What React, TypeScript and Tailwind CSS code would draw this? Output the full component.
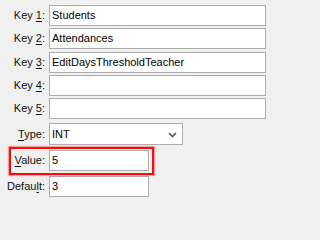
import React from 'react';

const font = { fontFamily: 'Tahoma, "Liberation Sans", Arial, sans-serif' };

const Label = ({ pre, u, post }: { pre: string; u: string; post: string }) => (
  <div className="w-[45px] shrink-0 text-right text-[11px] leading-none text-[#111] whitespace-nowrap">
    {pre}
    <span className="underline underline-offset-[2px]">{u}</span>
    {post}
  </div>
);

const Field = ({ value, width }: { value: string; width: string }) => (
  <div
    className={`${width} h-[21px] ml-[4px] border border-[#adadad] bg-white flex items-center pl-[2px] text-[11px] text-black`}
  >
    {value}
  </div>
);

export default function App() {
  const keys = ['Students', 'Attendances', 'EditDaysThresholdTeacher', '', ''];
  const rowTops = ['mt-[5px]', 'mt-[2px]', 'mt-[3px]', 'mt-[2px]', 'mt-[2px]'];

  return (
    <div className="min-h-screen w-full bg-[#f0f0f0]">
      <div className="w-[271px] h-[202px] overflow-hidden flex flex-col" style={font}>
        {keys.map((k, i) => (
          <div key={i} className={`flex items-center ${rowTops[i]}`}>
            <Label pre="Key " u={String(i + 1)} post=":" />
            <Field value={k} width="w-[217px]" />
          </div>
        ))}

        {/* Type */}
        <div className="flex items-center mt-[4px]">
          <Label pre="" u="T" post="ype:" />
          <div className="w-[134px] h-[22px] ml-[4px] border border-[#adadad] bg-white flex items-center justify-between pl-[2px] pr-[5px] text-[11px] text-black">
            <span>INT</span>
            <svg width="9" height="6" viewBox="0 0 9 6" className="mt-[1px]">
              <path d="M1 1 L4.5 4.5 L8 1" fill="none" stroke="#555" strokeWidth="1.6" />
            </svg>
          </div>
        </div>

        {/* Value */}
        <div className="relative flex items-center mt-[5px]">
          <Label pre="" u="V" post="alue:" />
          <Field value="5" width="w-[100px]" />
          <div className="absolute left-[9px] top-[-3px] w-[145px] h-[28px] border-2 border-[#ee1111] shadow-[0_0_1px_1px_rgba(255,80,80,0.5)] pointer-events-none" />
        </div>

        {/* Default */}
        <div className="flex items-center mt-[5px]">
          <Label pre="Defau" u="l" post="t:" />
          <Field value="3" width="w-[100px]" />
        </div>
      </div>
    </div>
  );
}
